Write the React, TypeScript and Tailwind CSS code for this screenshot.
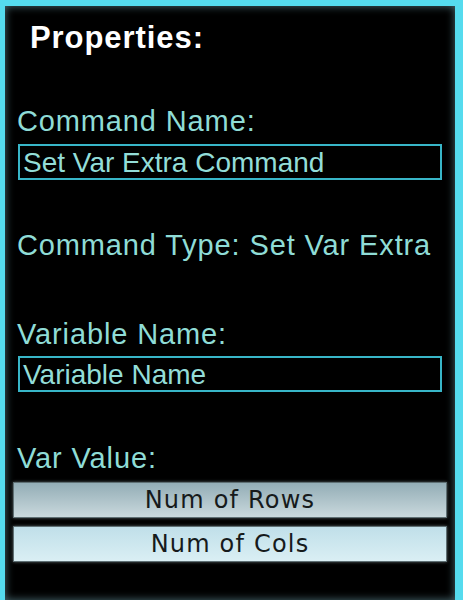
const LABEL = 'block text-[29px] leading-[29px] tracking-[0.03em] text-[#8fdcd6] whitespace-nowrap';

function Field({ value }: { value: string }) {
  return (
    <div className="mx-[13px] h-[36px] border-2 border-[#38b6c8] pl-[3px] pt-[1px] text-[28px] leading-[32px] text-[#93ddd8] whitespace-nowrap">
      {value}
    </div>
  );
}

function ValueButton({ label, active }: { label: string; active?: boolean }) {
  return (
    <button
      className={
        'mx-[8px] flex h-[36px] items-center justify-center border border-[#5f7074] font-["DejaVu_Sans",sans-serif] text-[24px] tracking-[0.05em] text-[#161a1b] shadow-[0_0_3px_rgba(190,210,215,0.45)] ' +
        (active
          ? 'bg-gradient-to-b from-[#93adb6] to-[#cad9dd]'
          : 'bg-gradient-to-b from-[#c0dfe9] to-[#daeff4]')
      }
    >
      {label}
    </button>
  );
}

export default function App() {
  return (
    <div className="h-[600px] w-[463px] overflow-hidden bg-[#55dbee] pl-[5px] pr-[8px] pt-[6px] font-['Liberation_Sans',Arial,sans-serif]">
      <div className="flex h-full flex-col bg-black shadow-[inset_0_0_8px_rgba(110,160,170,0.7)]">
        <span className="ml-[25px] mt-[16px] text-[31px] font-bold leading-[31px] tracking-[0.03em] text-white">
          Properties:
        </span>

        <span className={LABEL + ' ml-[12px] mt-[54px]'}>Command Name:</span>
        <div className="mt-[8px]">
          <Field value="Set Var Extra Command" />
        </div>

        <span className={LABEL + ' ml-[12px] mt-[51px]'}>Command Type: Set Var Extra</span>

        <span className={LABEL + ' ml-[12px] mt-[60px]'}>Variable Name:</span>
        <div className="mt-[7px]">
          <Field value="Variable Name" />
        </div>

        <span className={LABEL + ' ml-[12px] mt-[52px]'}>Var Value:</span>
        <div className="mt-[9px] flex flex-col gap-[8px]">
          <ValueButton label="Num of Rows" active />
          <ValueButton label="Num of Cols" />
        </div>
      </div>
    </div>
  );
}
